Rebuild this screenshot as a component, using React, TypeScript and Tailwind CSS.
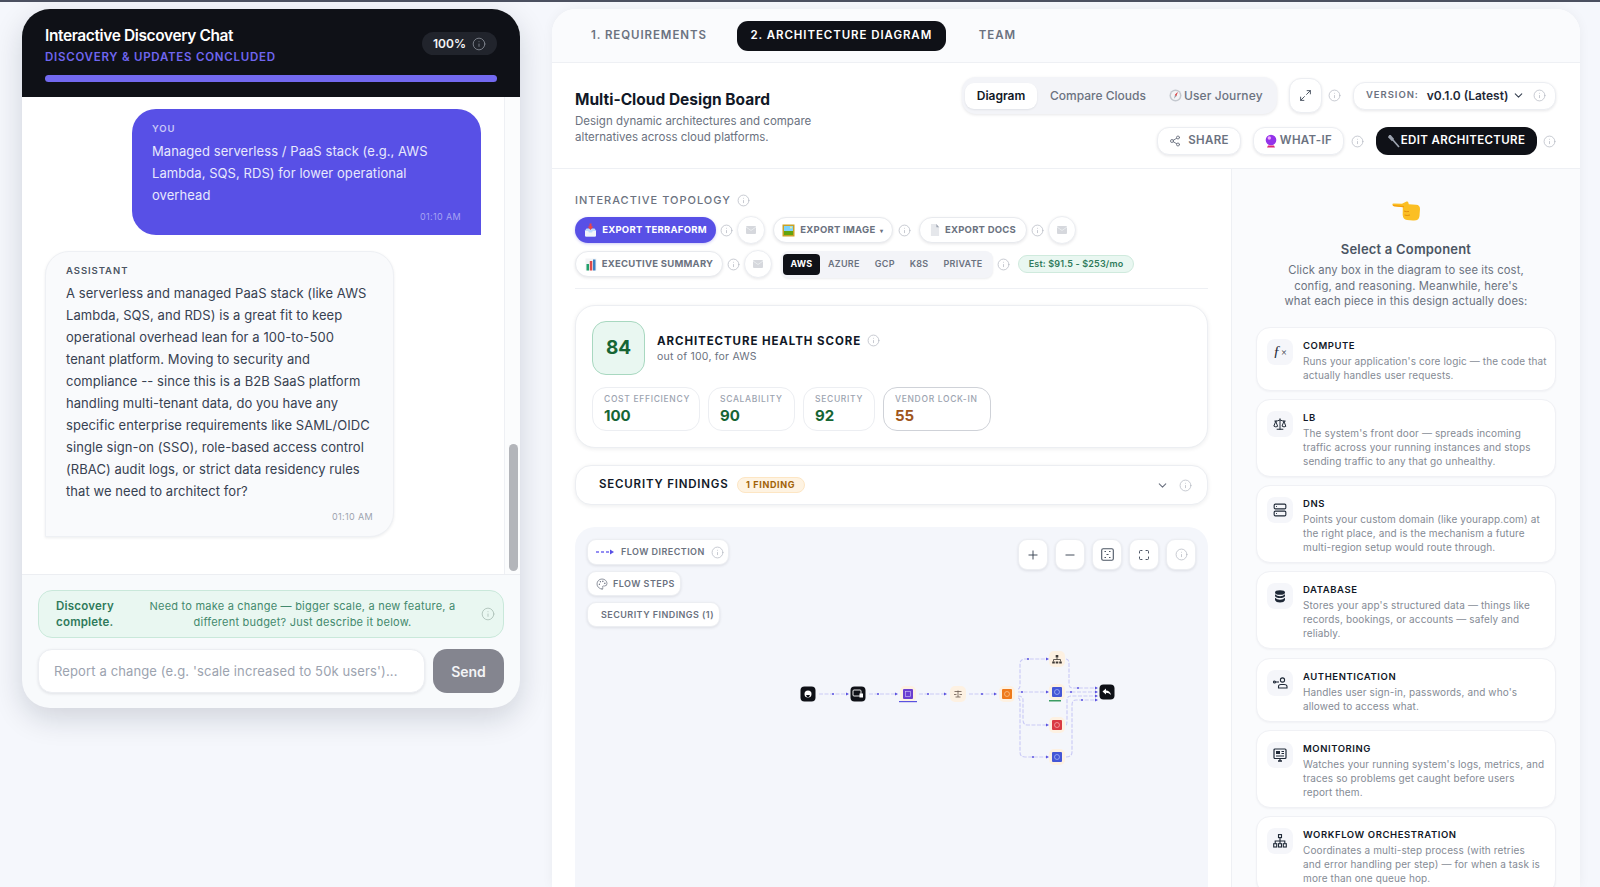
import React from "react";
import { Info, Share2, Maximize2, ChevronDown, Plus, Minus, Maximize, Palette, Scale, Server } from "lucide-react";

function I({ s = 13, c = "text-[#b6bac3]" }: { s?: number; c?: string }) {
  return <Info size={s} strokeWidth={1.4} className={`shrink-0 ${c}`} />;
}

function Mail() {
  return (
    <div className="flex h-[28px] w-[28px] shrink-0 items-center justify-center rounded-full border border-[#eceef2] bg-white shadow-[0_1px_3px_rgba(15,23,42,0.1)]">
      <svg width="10" height="8" viewBox="0 0 10 8"><rect width="10" height="8" rx="1" fill="#d6d8dd" /><path d="M0 1l5 3.5L10 1" stroke="#eef0f3" strokeWidth="0.8" fill="none" /></svg>
    </div>
  );
}

function Inbox() {
  return (
    <svg width="13" height="14" viewBox="0 0 13 14" className="shrink-0"><path d="M1 7.500L2.500 5.500H10.500L12 7.500V12.500A1 1 0 0 1 11 13.500H2A1 1 0 0 1 1 12.500Z" fill="#bfdbfe" /><path d="M1 8h3.200l.8 1.500h3l.8-1.500H12v4.500a1 1 0 0 1-1 1H2a1 1 0 0 1-1-1z" fill="#f1f5f9" /><path d="M5.500 0.500h2v3h1.800L6.500 7 3.700 3.500h1.800z" fill="#ef4444" /></svg>
  );
}
function Picture() {
  return (
    <svg width="13" height="13" viewBox="0 0 13 13" className="shrink-0"><rect x="0.500" y="0.500" width="12" height="12" fill="#c9a227" /><rect x="2" y="2" width="9" height="5" fill="#7dd3fc" /><rect x="2" y="7" width="9" height="4" fill="#65a30d" /><circle cx="9" cy="3.500" r="1" fill="#fef08a" /></svg>
  );
}
function Doc() {
  return (
    <svg width="10" height="14" viewBox="0 0 11 14" className="shrink-0"><path d="M1 0.500h6l3 3.500v9.500H1z" fill="#e5e7eb" /><path d="M7 0.500l3 3.500H7z" fill="#9ca3af" /></svg>
  );
}
function Chart() {
  return (
    <svg width="12" height="13" viewBox="0 0 12 13" className="shrink-0"><rect x="0.500" y="0.500" width="11" height="12" fill="#f3f4f6" /><rect x="1.500" y="6" width="2.500" height="6.500" fill="#22a06b" /><rect x="4.800" y="3" width="2.500" height="9.500" fill="#dc4a4a" /><rect x="8" y="1.500" width="2.500" height="11" fill="#3b82c4" /></svg>
  );
}
function Compass() {
  return (
    <svg width="13" height="13" viewBox="0 0 13 13" className="shrink-0"><circle cx="6.500" cy="6.500" r="6" fill="#c4c8cf" /><circle cx="6.500" cy="6.500" r="4.500" fill="#f3f4f6" /><path d="M8.800 3L7.200 7.200 5 9.800l1-4z" fill="#9ca3af" /><path d="M8.800 3L7.200 7.200 6 5.800z" fill="#ef4444" /></svg>
  );
}
function Ball() {
  return (
    <svg width="12" height="14" viewBox="0 0 12 14" className="shrink-0"><circle cx="6" cy="6" r="5.300" fill="#9333ea" /><circle cx="4.300" cy="4" r="1.700" fill="#f0abfc" /><path d="M3 11.500h6l1 2H2z" fill="#db2777" /></svg>
  );
}
function Wrench() {
  return (
    <svg width="12" height="13" viewBox="0 0 12 13" className="shrink-0"><path d="M2 0.500l3 3.500-1 1L1 2zM4.500 4.500l6.500 7.500" stroke="#9ca3af" strokeWidth="1.700" fill="#9ca3af" /></svg>
  );
}
function Hand() {
  return (
    <svg width="28" height="20" viewBox="0 0 28 20"><path d="M0.500 3.700Q0 2.300 2 2.400L10 2.800 14.500 0.500Q16 0 16.300 1.500L16.800 3.300 24 3.800Q28 4 28 8L27.500 15Q27 20 21 19.500L15 19Q11 18.700 10.700 14L10.800 6.200 2 5.200Q0.800 5 0.500 3.700Z" fill="#fbbf24" /><path d="M0.500 3.700Q0.800 5 2 5.200L12 6.300 12 5 2 4z" fill="#f59e0b" /><path d="M12 10Q14 11 17 10.500M12.500 14Q15 15 18 14" stroke="#e08a0b" strokeWidth="0.900" fill="none" /></svg>
  );
}

function ExportBtn({ icon, label, w, primary, caret }: { icon: React.ReactNode; label: string; w: string; primary?: boolean; caret?: boolean }) {
  return (
    <div className={`flex h-[26px] items-center justify-center gap-[5px] rounded-full whitespace-nowrap ${w} ${primary ? "bg-[#5850e6] text-white shadow-[0_1px_3px_rgba(88,80,230,0.3)]" : "border border-[#e8eaee] bg-white text-[#6b7280] shadow-[0_1px_3px_rgba(15,23,42,0.1)]"} text-[9.500px] font-bold tracking-[0.025em]`}>
      {icon}
      <span>{label}</span>
      {caret && <span className="text-[6px]">▾</span>}
    </div>
  );
}

function Metric({ label, value, w, color, strong }: { label: string; value: string; w: string; color: string; strong?: boolean }) {
  return (
    <div className={`flex h-[44px] flex-col justify-center rounded-[14px] border ${strong ? "border-[#cfd2d8]" : "border-[#eceef2]"} bg-white pl-[11px] ${w}`}>
      <span className="text-[8.500px] leading-[12px] font-medium tracking-[0.08em] text-[#9ca3af]">{label}</span>
      <span className={`mt-[2px] text-[15px] leading-[18px] font-bold ${color}`}>{value}</span>
    </div>
  );
}

const comps: { t: string; d: string[]; icon: React.ReactNode }[] = [
  { t: "COMPUTE", d: ["Runs your application's core logic — the code that", "actually handles user requests."], icon: <span className="font-['Liberation_Serif',serif] text-[15px] leading-none text-[#1f2937] italic">ƒ<span className="text-[10px]">×</span></span> },
  { t: "LB", d: ["The system's front door — spreads incoming", "traffic across your running instances and stops", "sending traffic to any that go unhealthy."], icon: <Scale size={14} strokeWidth={1.7} className="text-[#1f2937]" /> },
  { t: "DNS", d: ["Points your custom domain (like yourapp.com) at", "the right place, and is the mechanism a future", "multi-region setup would route through."], icon: <Server size={14} strokeWidth={1.9} className="text-[#1f2937]" /> },
  { t: "DATABASE", d: ["Stores your app's structured data — things like", "records, bookings, or accounts — safely and", "reliably."], icon: (
    <svg width="12" height="13" viewBox="0 0 12 13" fill="#1f2937"><ellipse cx="6" cy="2.500" rx="5" ry="2.300" /><path d="M1 4.300Q3 6.200 6 6.200T11 4.300V6Q10 8.100 6 8.100T1 6z" /><path d="M1 7.800Q3 9.700 6 9.700T11 7.800V10Q10 12.500 6 12.500T1 10z" /></svg>
  ) },
  { t: "AUTHENTICATION", d: ["Handles user sign-in, passwords, and who's", "allowed to access what."], icon: (
    <svg width="15" height="12" viewBox="0 0 15 12" fill="none" stroke="#1f2937" strokeWidth="1.100"><circle cx="9.500" cy="3" r="2.100" /><path d="M5.500 11V9.500Q5.500 7.500 8 7.500h3Q14 7.500 14 9.500V11z" /><circle cx="1.500" cy="5" r="1" /><path d="M2.500 5H6" /></svg>
  ) },
  { t: "MONITORING", d: ["Watches your running system's logs, metrics, and", "traces so problems get caught before users", "report them."], icon: (
    <svg width="14" height="14" viewBox="0 0 14 14" fill="none"><rect x="1" y="1" width="12" height="9.500" rx="1" stroke="#1f2937" strokeWidth="1.200" /><rect x="3" y="3" width="4" height="3" fill="#1f2937" /><path d="M8.500 3.500h2.500M8.500 5.500h2.500M3 8h8" stroke="#1f2937" /><path d="M5 13h4M7 10.500V13" stroke="#1f2937" strokeWidth="1.300" /></svg>
  ) },
  { t: "WORKFLOW ORCHESTRATION", d: ["Coordinates a multi-step process (with retries", "and error handling per step) — for when a task is", "more than one queue hop."], icon: (
    <svg width="14" height="14" viewBox="0 0 14 14" fill="none" stroke="#1f2937" strokeWidth="1.100"><rect x="5.500" y="0.600" width="3" height="3" /><path d="M7 3.600V7M2.200 9.500V7h9.600v2.500M7 7v2.500" /><rect x="0.700" y="9.700" width="3" height="3.300" /><rect x="5.500" y="9.700" width="3" height="3.300" /><rect x="10.300" y="9.700" width="3" height="3.300" /></svg>
  ) },
];

function Box({ x, y, fill, children, halo }: { x: number; y: number; fill: string; children?: React.ReactNode; halo?: boolean }) {
  return (
    <g transform={`translate(${x} ${y})`}>
      {halo && <rect x="-8" y="-8" width="16" height="16" rx="5" fill="#fdf1e2" />}
      <rect x={halo ? -5 : -7.500} y={halo ? -5 : -7.500} width={halo ? 10 : 15} height={halo ? 10 : 15} rx={halo ? 1 : 4} fill={fill} />
      {children}
    </g>
  );
}

function Diagram() {
  const edge = "#c9c9f6";
  const dot = "#5a52e0";
  const heads: [number, number][] = [[848, 694], [897, 694], [946, 694], [996, 694], [1048, 659], [1048, 692], [1048, 725], [1048, 757], [1097, 688], [1097, 692], [1097, 696], [1097, 700]];
  const dots: [number, number][] = [[833, 694], [878, 694], [928, 694], [982, 694], [1028, 659], [1022, 692], [1033, 757], [1078, 688], [1071, 692], [1082, 700]];
  return (
    <svg width="340" height="140" viewBox="780 630 340 140" className="absolute top-[103px] left-[205px]">
      <g fill="none" stroke={edge} strokeWidth="1.100" strokeDasharray="4 1.500">
        <path d="M819 694H848M869 694H897M919 694H946M969 694H996" />
        <path d="M1018 689Q1020 689 1020 685V664Q1020 659 1025 659H1048" />
        <path d="M1018 692H1048" />
        <path d="M1018 696Q1023 696 1023 700V720Q1023 725 1028 725H1048" />
        <path d="M1018 698Q1020 698 1020 702V752Q1020 757 1025 757H1048" />
        <path d="M1066 659Q1069 659 1069 664V684Q1069 688 1073 688H1097" />
        <path d="M1066 692H1097" />
        <path d="M1066 725Q1067 725 1067 720V700Q1067 696 1071 696H1097" />
        <path d="M1066 757Q1072 757 1072 752V705Q1072 700 1076 700H1097" />
      </g>
      {heads.map(([x, y], i) => <path key={i} d={`M${x - 2} ${y - 1.500}L${x + 1} ${y}L${x - 2} ${y + 1.500}z`} fill={dot} />)}
      {dots.map(([x, y], i) => <circle key={i} cx={x} cy={y} r="1" fill={dot} />)}
      <Box x={808} y={694} fill="#0f1117"><circle r="3.500" fill="#fff" /><path d="M-2 1h4l-1 2h-2z" fill="#0f1117" /></Box>
      <Box x={858} y={694} fill="#0f1117"><rect x="-5" y="-4" width="8" height="6" rx="1" fill="none" stroke="#fff" strokeWidth="0.900" /><rect x="1.500" y="-0.500" width="3.500" height="4" fill="#fff" /></Box>
      <Box x={908} y={694} fill="#6a3ed0" halo><rect x="-2.500" y="-2.500" width="5" height="5" fill="none" stroke="#d8c8fb" strokeWidth="0.600" /></Box>
      <rect x="899" y="701" width="18" height="1.200" fill="#5a52e0" />
      <g transform="translate(958 694)"><rect x="-8" y="-8" width="16" height="16" rx="5" fill="#fdf1e2" /><path d="M-3.500 -2.500h7M0 -3.500v6.500M-2.500 3h5M-4 0.500h2.500M1.500 0.500H4" stroke="#6b5b50" strokeWidth="0.800" fill="none" /></g>
      <Box x={1007} y={694} fill="#ee7a1c" halo><circle r="2.500" fill="none" stroke="#fed7aa" strokeWidth="0.600" /></Box>
      <g transform="translate(1057 659)"><rect x="-8" y="-8" width="16" height="16" rx="5" fill="#fdf1e2" /><path d="M0 -1.500v2M-3.500 2.500V0.500h7v2" stroke="#3f3a36" strokeWidth="0.800" fill="none" /><rect x="-1.300" y="-4" width="2.600" height="2.500" fill="#3f3a36" /><rect x="-4.800" y="2.500" width="2.600" height="2" fill="#3f3a36" /><rect x="-1.300" y="2.500" width="2.600" height="2" fill="#3f3a36" /><rect x="2.200" y="2.500" width="2.600" height="2" fill="#3f3a36" /></g>
      <Box x={1057} y={692} fill="#4456d6" halo><circle r="2.500" fill="none" stroke="#c7d2fe" strokeWidth="0.600" /></Box>
      <rect x="1049" y="700" width="12" height="1.500" fill="#3b9c63" />
      <Box x={1057} y={725} fill="#d93a42" halo><circle r="2.500" fill="none" stroke="#fecaca" strokeWidth="0.600" /></Box>
      <Box x={1057} y={757} fill="#4456d6" halo><circle r="2.500" fill="none" stroke="#c7d2fe" strokeWidth="0.600" /></Box>
      <Box x={1107} y={692} fill="#0f1117"><path d="M-4.500 -0.500L-1 -3.500V-1.500Q3 -1.500 4 3Q2 0.800 -1 0.800V2.500z" fill="#fff" /></Box>
    </svg>
  );
}

export default function App() {
  return (
    <div className="flex h-[887px] w-[1600px] overflow-hidden border-t-2 border-[#4b5060] bg-[#f5f7fc] pt-[7px] pl-[22px] font-[Inter,sans-serif]">
      {/* Chat */}
      <div className="flex h-[699px] w-[498px] shrink-0 flex-col overflow-hidden rounded-[28px] bg-[#f8fafc] shadow-[0_10px_30px_rgba(15,23,42,0.16)]">
        <div className="h-[88px] shrink-0 bg-[#0f1117] px-[23px] pt-[16px]">
          <div className="flex items-start justify-between">
            <div>
              <div className="text-[15.500px] leading-[22px] font-semibold tracking-[-0.025em] text-white">Interactive Discovery Chat</div>
              <div className="mt-[2px] text-[11.500px] leading-[16px] font-semibold tracking-[0.065em] text-[#6f66f0]">DISCOVERY &amp; UPDATES CONCLUDED</div>
            </div>
            <div className="mt-[7px] flex h-[23px] w-[75px] items-center justify-center gap-[6px] rounded-full bg-[#21242c] text-[12px] font-semibold text-[#f3f4f6]">
              100%<I s={14} c="text-[#8b8f99]" />
            </div>
          </div>
          <div className="mt-[10px] h-[7px] w-full rounded-full bg-[#7269f0]" />
        </div>
        <div className="flex h-[477px] shrink-0 bg-white">
          <div className="min-w-0 flex-1 overflow-hidden">
            <div className="mt-[12px] mr-[23px] ml-[110px] h-[126px] rounded-[24px] rounded-br-none bg-[#5850e6] px-[20px] pt-[13px] text-[#e7e8fd]">
              <div className="text-[9.500px] leading-[14px] font-semibold tracking-[0.1em] text-[#c9c8f8]">YOU</div>
              <div className="mt-[4px] text-[13px] leading-[22px] tracking-[0.005em] whitespace-nowrap">
                Managed serverless / PaaS stack (e.g., AWS
                <br />Lambda, SQS, RDS) for lower operational
                <br />overhead
              </div>
              <div className="mt-[5px] text-right text-[9px] leading-[12px] tracking-[0.04em] text-[#a7a3f3]">01:10 AM</div>
            </div>
            <div className="mt-[16px] ml-[23px] h-[286px] w-[349px] rounded-[24px] rounded-bl-none border border-[#eef0f4] bg-[#f9fafc] px-[20px] pt-[12px] shadow-[0_1px_3px_rgba(15,23,42,0.08)]">
              <div className="text-[9.500px] leading-[13px] font-semibold tracking-[0.1em] text-[#4b5563]">ASSISTANT</div>
              <div className="mt-[5px] text-[13px] leading-[22px] tracking-[0.005em] whitespace-nowrap text-[#374151]">
                A serverless and managed PaaS stack (like AWS
                <br />Lambda, SQS, and RDS) is a great fit to keep
                <br />operational overhead lean for a 100-to-500
                <br />tenant platform. Moving to security and
                <br />compliance -- since this is a B2B SaaS platform
                <br />handling multi-tenant data, do you have any
                <br />specific enterprise requirements like SAML/OIDC
                <br />single sign-on (SSO), role-based access control
                <br />(RBAC) audit logs, or strict data residency rules
                <br />that we need to architect for?
              </div>
              <div className="mt-[9px] text-right text-[9px] leading-[12px] tracking-[0.04em] text-[#9ca3af]">01:10 AM</div>
            </div>
          </div>
          <div className="flex w-[16px] shrink-0 flex-col justify-end border-l border-[#eef0f4] bg-[#fbfcfd] pb-[3px] pl-[4px]">
            <div className="h-[127px] w-[9px] rounded-full bg-[#b3b5ba]" />
          </div>
        </div>
        <div className="flex-1 border-t border-[#eceef2] px-[16px] pt-[15px]">
          <div className="flex h-[48px] items-center rounded-[14px] border border-[#c9e8da] bg-[#e9f7f1] pr-[8px] pl-[17px] text-[11px] leading-[16px] tracking-[0.02em]">
            <div className="w-[74px] shrink-0 text-[11.500px] font-semibold text-[#2f7a5b]">Discovery complete.</div>
            <div className="flex-1 text-center whitespace-nowrap text-[#43896d]">
              Need to make a change — bigger scale, a new feature, a
              <br />different budget? Just describe it below.
            </div>
            <I s={14} c="ml-[6px] text-[#a9bdb4]" />
          </div>
          <div className="mt-[11px] flex gap-[8px]">
            <input readOnly placeholder="Report a change (e.g. 'scale increased to 50k users')..." className="h-[44px] w-[387px] rounded-[14px] border border-[#eceef2] bg-white px-[15px] text-[13px] tracking-[0.01em] text-[#111827] shadow-[0_1px_3px_rgba(15,23,42,0.1)] outline-none placeholder:text-[#9ca3af]" />
            <div className="flex h-[44px] flex-1 items-center justify-center rounded-[14px] bg-[#84858f] text-[14px] font-semibold text-[#f3f4f6]">Send</div>
          </div>
        </div>
      </div>

      {/* Board */}
      <div className="ml-[32px] flex h-[878px] w-[1028px] shrink-0 flex-col overflow-hidden rounded-t-[24px] bg-white shadow-[0_0_12px_rgba(15,23,42,0.05)]">
        <div className="flex h-[54px] shrink-0 items-center border-b border-[#eef0f4] bg-[#fafbfd] pl-[39px] text-[11.500px] font-semibold tracking-[0.08em]">
          <span className="text-[#6b7280]">1. REQUIREMENTS</span>
          <span className="ml-[30px] flex h-[30px] w-[209px] items-center justify-center rounded-[11px] bg-[#0f1117] text-white">2. ARCHITECTURE DIAGRAM</span>
          <span className="ml-[33px] text-[#6b7280]">TEAM</span>
        </div>

        <div className="flex h-[106px] shrink-0 justify-between border-b border-[#eef0f4] pr-[24px] pl-[23px]">
          <div className="pt-[26px]">
            <div className="text-[15.500px] leading-[22px] font-bold text-[#111827]">Multi-Cloud Design Board</div>
            <div className="mt-[3px] text-[11.500px] leading-[15.500px] text-[#6b7280]">
              Design dynamic architectures and compare
              <br />alternatives across cloud platforms.
            </div>
          </div>
          <div className="flex flex-col items-end pt-[14px]">
            <div className="flex h-[37px] items-center">
              <div className="flex h-[37px] w-[315px] items-center rounded-[14px] bg-[#f3f4f8] px-[3px] text-[12px] font-medium text-[#6b7280] shadow-[0_1px_3px_rgba(15,23,42,0.1)]">
                <span className="flex h-[26px] w-[72px] items-center justify-center rounded-[9px] bg-white font-semibold text-[#111827] shadow-[0_1px_2px_rgba(15,23,42,0.08)]">Diagram</span>
                <span className="ml-[13px]">Compare Clouds</span>
                <span className="ml-[23px] flex items-center gap-[2px] tracking-[0.01em]"><Compass />User Journey</span>
              </div>
              <div className="ml-[12px] flex h-[35px] w-[33px] items-center justify-center rounded-[12px] border border-[#eceef2] bg-white shadow-[0_1px_3px_rgba(15,23,42,0.1)]">
                <Maximize2 size={13} strokeWidth={1.8} className="text-[#4b5563]" />
              </div>
              <span className="ml-[6px]"><I /></span>
              <div className="ml-[12px] flex h-[28px] w-[203px] items-center rounded-[12px] border border-[#eceef2] bg-white pl-[12px] shadow-[0_1px_3px_rgba(15,23,42,0.1)]">
                <span className="text-[9.500px] font-semibold tracking-[0.1em] text-[#6b7280]">VERSION:</span>
                <span className="ml-[8px] text-[12px] font-semibold text-[#1f2937]">v0.1.0 (Latest)</span>
                <ChevronDown size={13} className="ml-[4px] text-[#374151]" />
                <span className="ml-[8px]"><I /></span>
              </div>
            </div>
            <div className="mt-[13px] flex h-[28px] items-center">
              <div className="flex h-[28px] w-[84px] items-center justify-center gap-[7px] rounded-[12px] border border-[#eceef2] bg-white text-[11.500px] font-semibold tracking-[0.03em] text-[#6b7280] shadow-[0_1px_3px_rgba(15,23,42,0.1)]">
                <Share2 size={12} strokeWidth={1.8} />SHARE
              </div>
              <div className="ml-[12px] flex h-[28px] w-[91px] items-center justify-center gap-[3px] rounded-[12px] border border-[#eceef2] bg-white text-[11.500px] font-semibold tracking-[0.03em] text-[#6b7280] shadow-[0_1px_3px_rgba(15,23,42,0.1)]">
                <Ball />WHAT-IF
              </div>
              <span className="ml-[7px]"><I /></span>
              <div className="ml-[12px] flex h-[28px] w-[161px] items-center justify-center gap-[1px] rounded-[12px] bg-[#0f1117] text-[11.500px] font-semibold tracking-[0.03em] text-white">
                <Wrench />EDIT ARCHITECTURE
              </div>
              <span className="ml-[6px]"><I /></span>
            </div>
          </div>
        </div>

        <div className="flex min-h-0 flex-1">
          <div className="min-w-0 flex-1 border-r border-[#eef0f4] px-[23px]">
            <div className="mt-[23px] flex h-[16px] items-center gap-[6px] text-[11px] font-medium tracking-[0.09em] text-[#6b7280]">
              INTERACTIVE TOPOLOGY<I />
            </div>
            <div className="mt-[8px] flex h-[28px] items-center">
              <ExportBtn primary icon={<Inbox />} label="EXPORT TERRAFORM" w="w-[141px]" />
              <span className="ml-[4px]"><I /></span>
              <span className="ml-[4px]"><Mail /></span>
              <span className="ml-[8px]"><ExportBtn icon={<Picture />} label="EXPORT IMAGE" caret w="w-[120px]" /></span>
              <span className="ml-[5px]"><I /></span>
              <span className="ml-[8px]"><ExportBtn icon={<Doc />} label="EXPORT DOCS" w="w-[108px]" /></span>
              <span className="ml-[4px]"><I /></span>
              <span className="ml-[4px]"><Mail /></span>
            </div>
            <div className="mt-[6px] flex h-[28px] items-center">
              <ExportBtn icon={<Chart />} label="EXECUTIVE SUMMARY" w="w-[148px]" />
              <span className="ml-[4px]"><I /></span>
              <span className="ml-[4px]"><Mail /></span>
              <div className="ml-[9px] flex h-[27px] w-[212px] items-center rounded-[8px] bg-[#f3f4f8] pl-[2px] text-[9px] font-semibold tracking-[0.03em] text-[#6b7280] shadow-[0_1px_2px_rgba(15,23,42,0.08)]">
                <span className="flex h-[21px] w-[37px] items-center justify-center rounded-[4px] bg-[#0f1117] font-bold text-white">AWS</span>
                <span className="ml-[8px]">AZURE</span>
                <span className="ml-[15px]">GCP</span>
                <span className="ml-[15px]">K8S</span>
                <span className="ml-[15px]">PRIVATE</span>
              </div>
              <span className="ml-[4px]"><I /></span>
              <div className="ml-[8px] flex h-[18px] w-[116px] items-center justify-center rounded-full border border-[#cfeadd] bg-[#e9f7f1] text-[9px] font-semibold tracking-[0.02em] text-[#2f7a5b]">Est: $91.5 - $253/mo</div>
            </div>
            <div className="mt-[10px] h-px bg-[#eef0f4]" />

            <div className="mt-[16px] h-[143px] rounded-[20px] border border-[#eceef2] bg-white px-[16px] pt-[15px] shadow-[0_1px_4px_rgba(15,23,42,0.08)]">
              <div className="flex items-center">
                <div className="flex h-[54px] w-[53px] items-center justify-center rounded-[14px] border border-[#a8d8c0] bg-[#e9f7f1] text-[19px] font-bold text-[#166534]">84</div>
                <div className="ml-[12px]">
                  <div className="flex items-center gap-[6px] text-[11.500px] leading-[16px] font-bold tracking-[0.08em] text-[#111827]">ARCHITECTURE HEALTH SCORE<I /></div>
                  <div className="mt-[1px] text-[10.500px] leading-[14px] tracking-[0.02em] text-[#6b7280]">out of 100, for AWS</div>
                </div>
              </div>
              <div className="mt-[12px] flex gap-[8px]">
                <Metric label="COST EFFICIENCY" value="100" w="w-[108px]" color="text-[#166534]" />
                <Metric label="SCALABILITY" value="90" w="w-[87px]" color="text-[#166534]" />
                <Metric label="SECURITY" value="92" w="w-[72px]" color="text-[#166534]" />
                <Metric label="VENDOR LOCK-IN" value="55" w="w-[108px]" color="text-[#a0561c]" strong />
              </div>
            </div>

            <div className="mt-[17px] flex h-[40px] items-center rounded-[16px] border border-[#eceef2] bg-white pr-[15px] pl-[23px] shadow-[0_1px_4px_rgba(15,23,42,0.08)]">
              <span className="text-[11.500px] font-semibold tracking-[0.07em] text-[#111827]">SECURITY FINDINGS</span>
              <span className="ml-[8px] flex h-[16px] w-[68px] items-center justify-center rounded-full border border-[#fde6c4] bg-[#fef3e2] text-[9px] font-bold tracking-[0.07em] text-[#a16207]">1 FINDING</span>
              <ChevronDown size={13} className="mr-[10px] ml-auto text-[#6b7280]" />
              <I />
            </div>

            <div className="relative mt-[22px] h-[400px] rounded-[20px] bg-[#f4f6fb] px-[12px] pt-[12px]">
              <div className="flex justify-between">
                <div className="flex flex-col items-start gap-[6px] whitespace-nowrap">
                  <div className="flex h-[26px] w-[142px] items-center rounded-[9px] border border-[#eceef2] bg-white pl-[8px] text-[9px] font-semibold tracking-[0.05em] text-[#6b7280] shadow-[0_1px_3px_rgba(15,23,42,0.1)]">
                    <svg width="18" height="6" viewBox="0 0 18 6" className="shrink-0"><path d="M0 3h3M5 3h3M10 3h3" stroke="#7269f0" strokeWidth="1.400" /><path d="M14 0.500L18 3 14 5.500z" fill="#5850e6" /></svg>
                    <span className="ml-[7px]">FLOW DIRECTION</span>
                    <span className="ml-[6px]"><I /></span>
                  </div>
                  <div className="flex h-[25px] w-[94px] items-center rounded-[9px] border border-[#eceef2] bg-white pl-[8px] text-[9px] font-semibold tracking-[0.05em] text-[#6b7280] shadow-[0_1px_3px_rgba(15,23,42,0.1)]">
                    <Palette size={12} strokeWidth={1.5} className="shrink-0" />
                    <span className="ml-[5px]">FLOW STEPS</span>
                  </div>
                  <div className="flex h-[25px] w-[133px] items-center rounded-[9px] border border-[#eceef2] bg-white pl-[13px] text-[9px] font-semibold tracking-[0.05em] text-[#6b7280] shadow-[0_1px_3px_rgba(15,23,42,0.1)]">
                    SECURITY FINDINGS (1)
                  </div>
                </div>
                <div className="flex gap-[7px]">
                  {[
                    <Plus key="a" size={14} strokeWidth={1.6} />,
                    <Minus key="b" size={14} strokeWidth={1.6} />,
                    <svg key="c" width="13" height="13" viewBox="0 0 13 13" fill="none"><rect x="0.700" y="0.700" width="11.600" height="11.600" rx="1.500" stroke="#4b5563" strokeWidth="1.100" /><path d="M3.500 3.500h1.500M8 3.500h1.500M3.500 9.500h1.500M8 9.500h1.500M5.500 6.500h2" stroke="#4b5563" strokeWidth="1.100" /></svg>,
                    <Maximize key="d" size={12} strokeWidth={1.8} />,
                    <I key="e" s={13} />,
                  ].map((ic, i) => (
                    <div key={i} className="flex h-[31px] w-[30px] items-center justify-center rounded-[9px] border border-[#eceef2] bg-white text-[#374151] shadow-[0_1px_3px_rgba(15,23,42,0.1)]">{ic}</div>
                  ))}
                </div>
              </div>
              <Diagram />
            </div>
          </div>

          <div className="w-[348px] shrink-0 bg-[#fafbfd] px-[24px] pt-[32px]">
            <div className="flex justify-center"><Hand /></div>
            <div className="mt-[19px] text-center text-[13px] leading-[18px] font-semibold tracking-[0.015em] text-[#4b5563]">Select a Component</div>
            <div className="mt-[5px] text-center text-[11.250px] leading-[15.500px] tracking-[0.01em] text-[#6b7280]">
              Click any box in the diagram to see its cost,
              <br />config, and reasoning. Meanwhile, here's
              <br />what each piece in this design actually does:
            </div>
            <div className="mt-[17px] flex flex-col gap-[8.250px]">
              {comps.map((c) => (
                <div key={c.t} className="flex rounded-[14px] border border-[#f0f1f5] bg-white pt-[12px] pr-[8px] pb-[8px] pl-[10px] shadow-[0_1px_2px_rgba(15,23,42,0.04)]">
                  <div className="-mt-[1px] flex h-[26px] w-[26px] shrink-0 items-center justify-center rounded-[8px] bg-[#f5f6fa]">{c.icon}</div>
                  <div className="ml-[10px] min-w-0">
                    <div className="text-[9.500px] leading-[12px] font-semibold tracking-[0.06em] text-[#111827]">{c.t}</div>
                    <div className="mt-[2px] text-[10px] leading-[14px] tracking-[0.012em] whitespace-nowrap text-[#858b95]">
                      {c.d.map((l, i) => <div key={i}>{l}</div>)}
                    </div>
                  </div>
                </div>
              ))}
            </div>
          </div>
        </div>
      </div>
    </div>
  );
}
